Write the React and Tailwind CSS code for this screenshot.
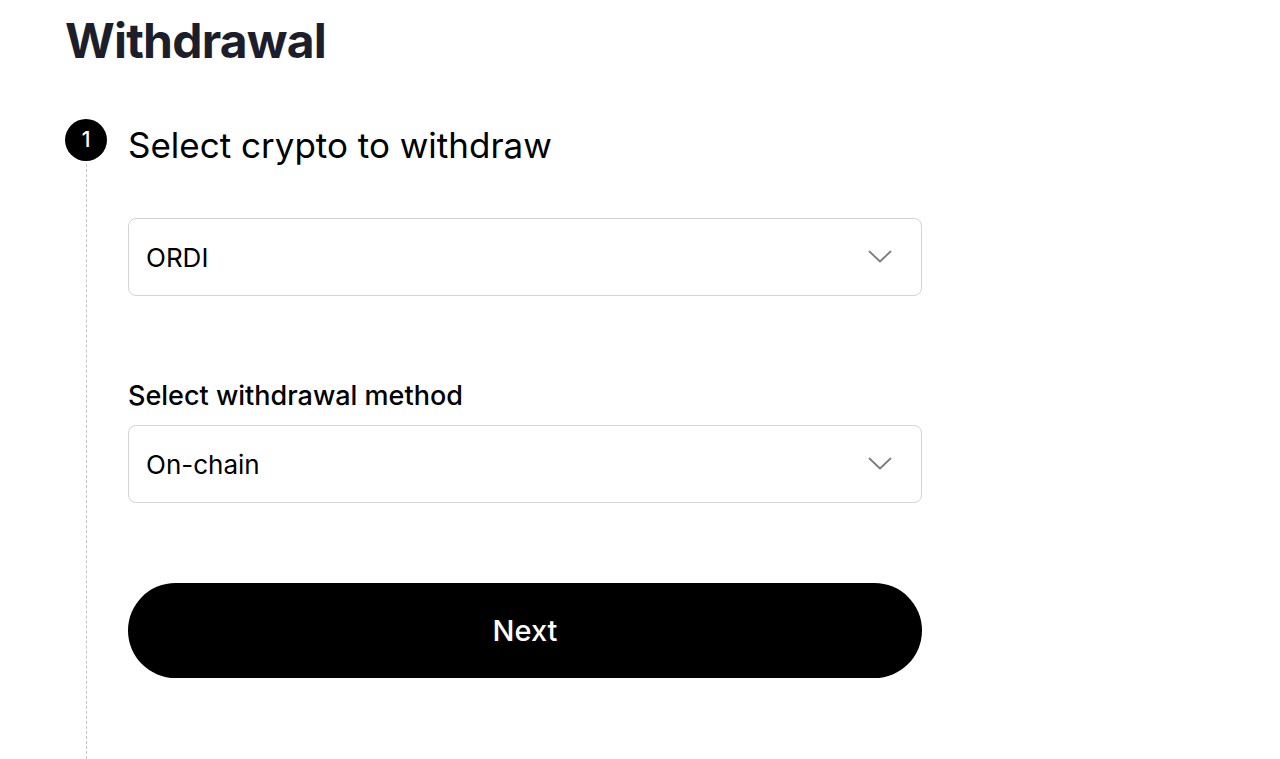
function Chevron() {
  return (
    <svg width="24" height="14" viewBox="0 0 24 14" fill="none" className="text-[#7d7d7d]">
      <path d="M1.5 1.5 L12 11.5 L22.5 1.5" stroke="currentColor" strokeWidth="1.8" strokeLinecap="round" strokeLinejoin="round" />
    </svg>
  );
}

function SelectBox({ value }) {
  return (
    <div className="flex h-[78px] w-[794px] items-center justify-between rounded-lg border-[1.5px] border-[#d4d4d4] bg-white pl-[17px] pr-[29px]">
      <span className="text-[26px] text-black">{value}</span>
      <Chevron />
    </div>
  );
}

export default function App() {
  return (
    <div className="min-h-[759px] overflow-hidden bg-white font-['Inter',sans-serif] text-black">
      <div className="pl-[65px] pt-[12px]">
        <h1 className="text-[48px] font-bold leading-[58px] tracking-[-0.8px] text-[#1c1f2b]">
          Withdrawal
        </h1>

        <div className="mt-[49px] flex">
          {/* Step rail */}
          <div className="flex w-[42px] flex-col items-center">
            <div className="flex h-[42px] w-[42px] items-center justify-center rounded-full bg-black text-[21px] font-medium text-white">
              1
            </div>
            <div className="mt-[3px] h-[600px] border-l border-dashed border-[#c4c4c4]" />
          </div>

          <div className="ml-[21px]">
            <h2 className="mt-[4px] text-[35px] leading-[44px] text-black">
              Select crypto to withdraw
            </h2>

            <div className="mt-[51px]">
              <SelectBox value="ORDI" />
            </div>

            <p className="mt-[83px] text-[27px] font-medium leading-[34px] text-black">
              Select withdrawal method
            </p>
            <div className="mt-[12px]">
              <SelectBox value="On-chain" />
            </div>

            <button className="mt-[80px] flex h-[95px] w-[794px] items-center justify-center rounded-full bg-black text-[29px] font-medium text-white">
              Next
            </button>
          </div>
        </div>
      </div>
    </div>
  );
}
